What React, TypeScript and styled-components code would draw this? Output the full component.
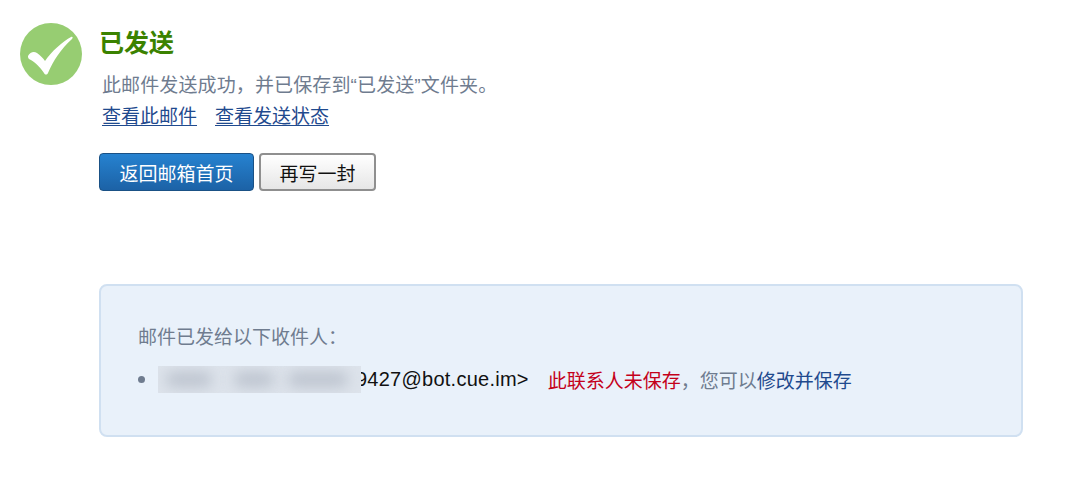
import React from 'react';
import styled, { createGlobalStyle } from 'styled-components';

const GlobalStyle = createGlobalStyle`
  html, body {
    margin: 0;
    padding: 0;
    background: #ffffff;
  }
  body {
    font-family: "Liberation Sans", "Noto Sans CJK SC", sans-serif;
    font-size: 19px;
  }
`;

const Page = styled.div`
  width: 1080px;
  height: 483px;
  overflow: hidden;
  box-sizing: border-box;
  padding: 23px 57px 0 20px;
`;

const Header = styled.div`
  display: flex;
  align-items: flex-start;
`;

const Badge = styled.svg`
  width: 62px;
  height: 62px;
  flex: none;
`;

const Main = styled.div`
  margin-left: 17px;
  padding-top: 3px;
`;

const Title = styled.h1`
  margin: 0;
  font-size: 25px;
  line-height: 34px;
  font-weight: 700;
  color: #3b8200;
`;

const Message = styled.p`
  margin: 11px 0 0 3px;
  line-height: 30px;
  letter-spacing: 0.12px;
  color: #6f7c8f;
`;

const LinkRow = styled.div`
  display: flex;
  gap: 18px;
  margin: 2px 0 0 3px;
  line-height: 28px;
`;

const TextLink = styled.a`
  color: #1f4a8e;
  text-decoration: underline;
  text-underline-offset: 2px;
`;

const Buttons = styled.div`
  display: flex;
  gap: 5px;
  margin-top: 22px;
`;

const Button = styled.button<{ $primary?: boolean }>`
  height: 38px;
  box-sizing: border-box;
  padding: 0;
  font: inherit;
  font-size: 19px;
  border-radius: 4px;
  width: ${(p) => (p.$primary ? '155px' : '117px')};
  color: ${(p) => (p.$primary ? '#ffffff' : '#111111')};
  border: ${(p) => (p.$primary ? '1px solid #1a5185' : '2px solid #8f8f8f')};
  background: ${(p) =>
    p.$primary
      ? 'linear-gradient(#2682d0, #1c62a6)'
      : 'linear-gradient(#ffffff, #e6e6e6)'};
`;

const RecipientPanel = styled.section`
  margin: 93px 0 0 79px;
  height: 153px;
  box-sizing: border-box;
  padding: 37px 37px 0;
  background: #e9f1fa;
  border: 2px solid #d0e0f1;
  border-radius: 8px;
`;

const PanelTitle = styled.div`
  line-height: 30px;
  color: #6f7c8f;
`;

const RecipientRow = styled.div`
  display: flex;
  align-items: center;
  height: 28px;
  margin-top: 12px;
  white-space: nowrap;
`;

const Bullet = styled.span`
  width: 7px;
  height: 7px;
  border-radius: 50%;
  background: #6f7c8f;
  margin-right: 13px;
  flex: none;
`;

const Redacted = styled.span`
  position: relative;
  z-index: 1;
  width: 203px;
  height: 27px;
  flex: none;
  margin-right: -5px;
  overflow: hidden;
  background: #dde3eb;
`;

const Smudge = styled.span<{ $left: number; $width: number }>`
  position: absolute;
  top: 6px;
  left: ${(p) => p.$left}px;
  width: ${(p) => p.$width}px;
  height: 15px;
  border-radius: 7px;
  background: #bcc3ce;
  filter: blur(7px);
`;

const Address = styled.span`
  color: #111111;
  font-size: 20px;
  letter-spacing: 0.25px;
`;

const Warning = styled.span`
  margin-left: 19px;
  color: #c4001a;
`;

const Note = styled.span`
  color: #6f7c8f;
`;

const EditLink = styled.a`
  color: #1f4a8e;
`;

export default function App() {
  return (
    <>
      <GlobalStyle />
      <Page>
        <Header>
          <Badge viewBox="0 0 62 62">
            <circle cx="31" cy="31" r="31" fill="#97cd72" />
            <path
              d="M8 33 C10 29 14 28 17 30 C20 32 23 35 25 38 C32 28 42 19 51 14 C53 13 53 15 52 16 C41 26 33 38 28 50 C27 52 25 52 24 50 C20 44 14 38 9 36 C8 35 8 34 8 33 Z"
              fill="#ffffff"
            />
          </Badge>
          <Main>
            <Title>已发送</Title>
            <Message>此邮件发送成功，并已保存到“已发送”文件夹。</Message>
            <LinkRow>
              <TextLink href="#">查看此邮件</TextLink>
              <TextLink href="#">查看发送状态</TextLink>
            </LinkRow>
            <Buttons>
              <Button $primary>返回邮箱首页</Button>
              <Button>再写一封</Button>
            </Buttons>
          </Main>
        </Header>
        <RecipientPanel>
          <PanelTitle>邮件已发给以下收件人：</PanelTitle>
          <RecipientRow>
            <Bullet />
            <Redacted>
              <Smudge $left={8} $width={46} />
              <Smudge $left={76} $width={40} />
              <Smudge $left={130} $width={60} />
            </Redacted>
            <Address>9427@bot.cue.im&gt;</Address>
            <Warning>此联系人未保存</Warning>
            <Note>，您可以</Note>
            <EditLink>修改并保存</EditLink>
          </RecipientRow>
        </RecipientPanel>
      </Page>
    </>
  );
}
